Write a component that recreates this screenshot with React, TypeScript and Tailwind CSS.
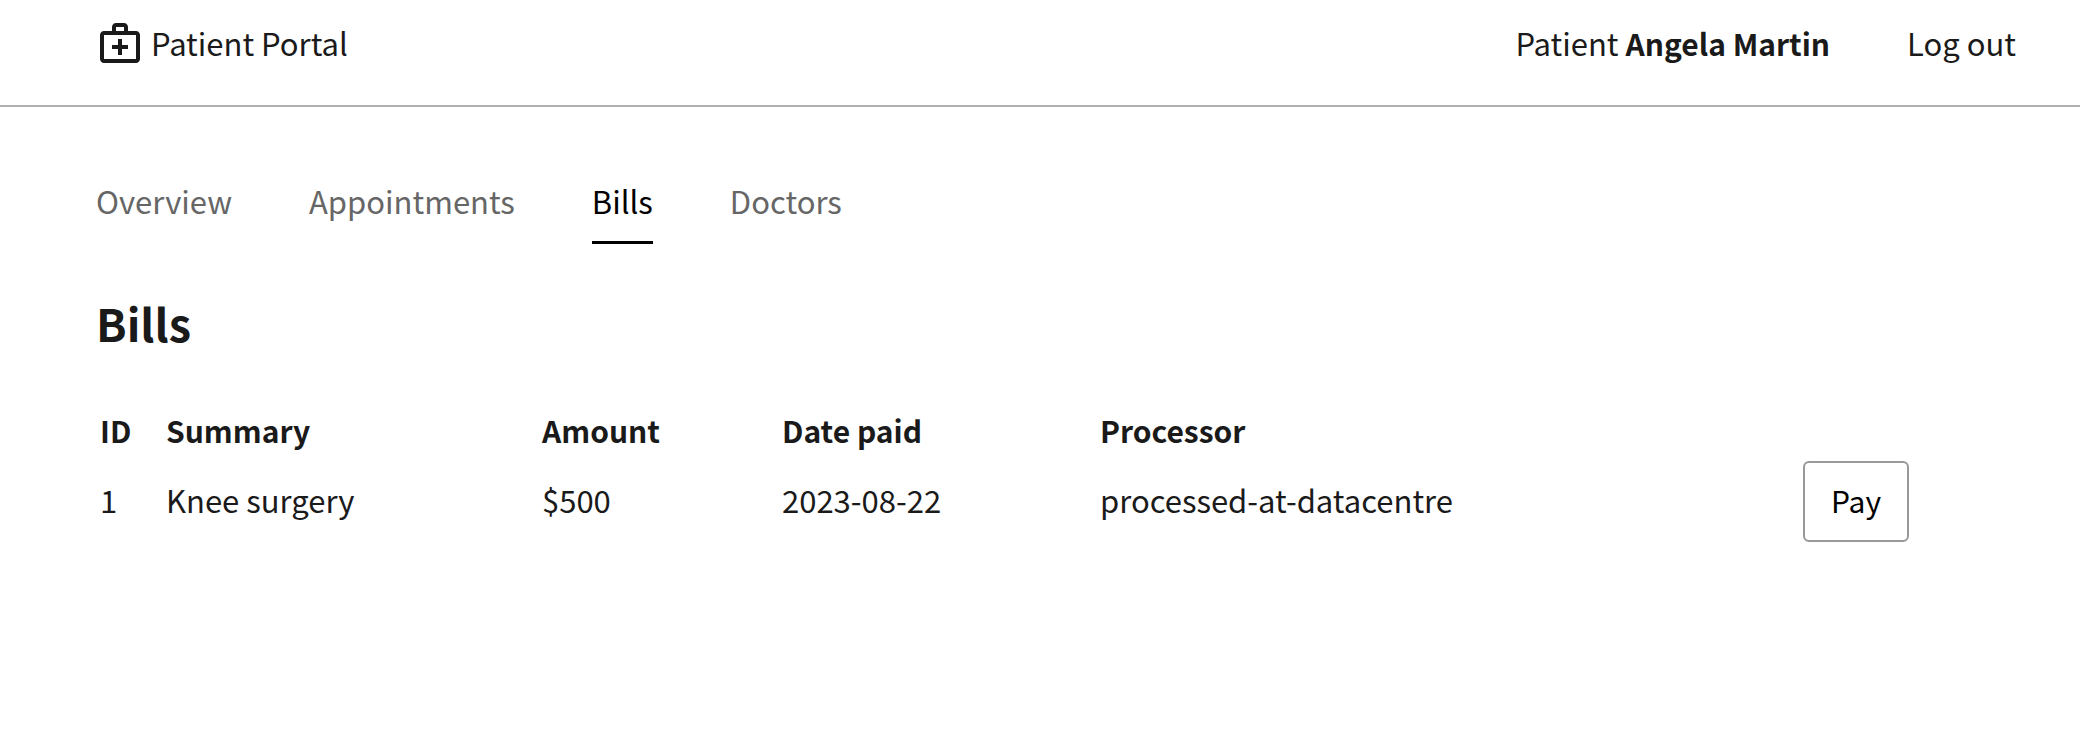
import React from "react";

const bills = [
  { id: 1, summary: "Knee surgery", amount: "$500", date: "2023-08-22", processor: "processed-at-datacentre" },
];

const tabs = ["Overview", "Appointments", "Bills", "Doctors"];

function LogoIcon() {
  return (
    <svg viewBox="0 0 24 24" className="size-12" fill="currentColor" aria-hidden="true">
      <path d="M20 6h-4V4c0-1.100-.9-2-2-2h-4c-1.100 0-2 .9-2 2v2H4c-1.100 0-2 .9-2 2v12c0 1.100.9 2 2 2h16c1.100 0 2-.9 2-2V8c0-1.100-.9-2-2-2zM10 4h4v2h-4V4zm10 16H4V8h16v12z" />
      <path d="M13 10h-2v3H8v2h3v3h2v-3h3v-2h-3z" />
    </svg>
  );
}

export default function App() {
  return (
    <div className="min-h-screen bg-white font-['Noto_Sans_CJK_SC',sans-serif] text-[31px] leading-12 text-[#1a1a1a]">
      <header className="flex items-center justify-between border-b-2 border-[#b0b0b0] pt-[19px] pr-16 pb-[38px] pl-24">
        <a href="#" className="flex items-center gap-[7px]">
          <LogoIcon />
          <span>Patient Portal</span>
        </a>
        <div className="flex items-center gap-[77px]">
          <p>
            Patient <strong className="text-[30px] font-bold">Angela Martin</strong>
          </p>
          <a href="#">Log out</a>
        </div>
      </header>
      <nav className="flex gap-[77px] px-24 pt-[70px]">
        {tabs.map((tab) => (
          <a
            key={tab}
            href="#"
            aria-current={tab === "Bills" ? "page" : undefined}
            className={
              tab === "Bills"
                ? "border-b-3 border-black pb-4 text-black"
                : "border-b-3 border-transparent pb-4 text-[#666666]"
            }
          >
            {tab}
          </a>
        ))}
      </nav>
      <main className="px-24 pt-[47px]">
        <h1 className="text-[45px] leading-16 font-bold">Bills</h1>
        <table className="mt-[51px] w-full table-fixed text-left">
          <thead className="text-[30px]">
            <tr>
              <th className="w-[70px] pl-1">ID</th>
              <th className="w-94">Summary</th>
              <th className="w-60">Amount</th>
              <th className="w-[318px]">Date paid</th>
              <th>Processor</th>
              <th className="w-[181px]"></th>
            </tr>
          </thead>
          <tbody>
            {bills.map((bill) => (
              <tr key={bill.id}>
                <td className="pt-[7px] pb-1 pl-1">{bill.id}</td>
                <td className="pt-[7px] pb-1">{bill.summary}</td>
                <td className="pt-[7px] pb-1">{bill.amount}</td>
                <td className="pt-[7px] pb-1">{bill.date}</td>
                <td className="pt-[7px] pb-1">{bill.processor}</td>
                <td className="pt-[7px]">
                  <button
                    type="button"
                    className="block h-[81px] rounded-md border-2 border-[#999999] px-[26px] pb-1 text-[30px] text-black"
                  >
                    Pay
                  </button>
                </td>
              </tr>
            ))}
          </tbody>
        </table>
      </main>
    </div>
  );
}
